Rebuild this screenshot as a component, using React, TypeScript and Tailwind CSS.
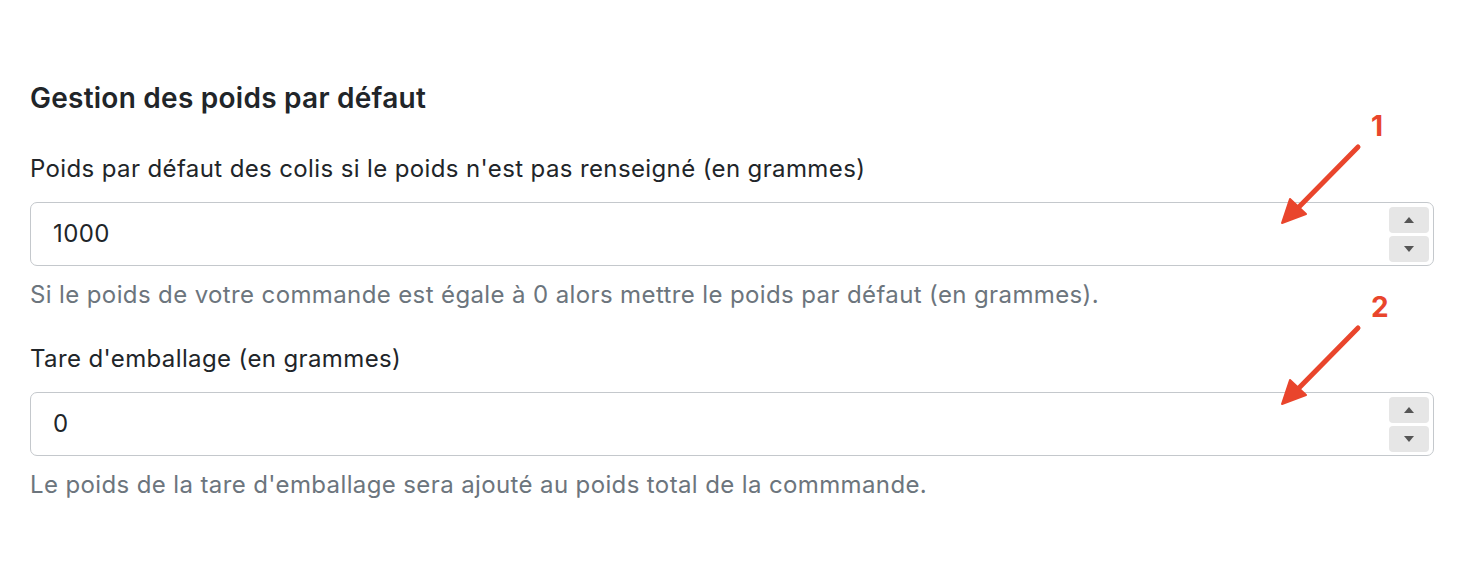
import React from "react";

type FieldProps = {
  label: string;
  value: string;
  help: string;
};

function Spinner() {
  return (
    <div className="flex flex-col gap-[3px] pr-[4px]">
      <button className="w-[40px] h-[26px] rounded-[4px] bg-[#e6e6e6] flex items-center justify-center">
        <svg width="10" height="6" viewBox="0 0 10 6"><path d="M5 0 L10 6 L0 6 Z" fill="#555" /></svg>
      </button>
      <button className="w-[40px] h-[26px] rounded-[4px] bg-[#e6e6e6] flex items-center justify-center">
        <svg width="10" height="6" viewBox="0 0 10 6"><path d="M0 0 L10 0 L5 6 Z" fill="#555" /></svg>
      </button>
    </div>
  );
}

function NumberField({ label, value, help }: FieldProps) {
  return (
    <div className="flex flex-col">
      <label className="text-[24px] tracking-[0.38px] text-[#212529] leading-[32px]">{label}</label>
      <div className="mt-[17px] h-[64px] w-[1404px] rounded-[7px] border border-[#c4c8cc] flex items-center justify-between pl-[22px]">
        <span className="text-[24px] tracking-[0.38px] text-[#212529]">{value}</span>
        <Spinner />
      </div>
      <p className="mt-[13px] text-[24px] tracking-[0.38px] text-[#6c757d] leading-[32px]">{help}</p>
    </div>
  );
}

function Arrow({ num }: { num: string }) {
  return (
    <svg width="130" height="130" viewBox="0 0 130 130" className="absolute">
      <line x1="88" y1="37" x2="22" y2="104" stroke="#e9452c" strokeWidth="5" strokeLinecap="round" />
      <path d="M12 113 L20 89 L36 104 Z" fill="#e9452c" stroke="#e9452c" strokeWidth="2" strokeLinejoin="round" />
      <text x="101" y="26" fill="#e9452c" fontSize="28" fontWeight="700" fontFamily="Inter, sans-serif">{num}</text>
    </svg>
  );
}

export default function App() {
  return (
    <div className="relative w-[1466px] h-[582px] bg-white pl-[30px] pt-[78px]" style={{ fontFamily: "Inter, 'Noto Sans', sans-serif" }}>
      <h2 className="text-[28px] tracking-[0.25px] font-semibold text-[#212529] leading-[40px]">Gestion des poids par défaut</h2>
      <div className="mt-[35px] flex flex-col gap-[32px]">
        <NumberField
          label="Poids par défaut des colis si le poids n'est pas renseigné (en grammes)"
          value="1000"
          help="Si le poids de votre commande est égale à 0 alors mettre le poids par défaut (en grammes)."
        />
        <NumberField
          label="Tare d'emballage (en grammes)"
          value="0"
          help="Le poids de la tare d'emballage sera ajouté au poids total de la commmande."
        />
      </div>
      <div className="absolute left-[1270px] top-[110px]"><Arrow num="1" /></div>
      <div className="absolute left-[1270px] top-[291px]"><Arrow num="2" /></div>
    </div>
  );
}
